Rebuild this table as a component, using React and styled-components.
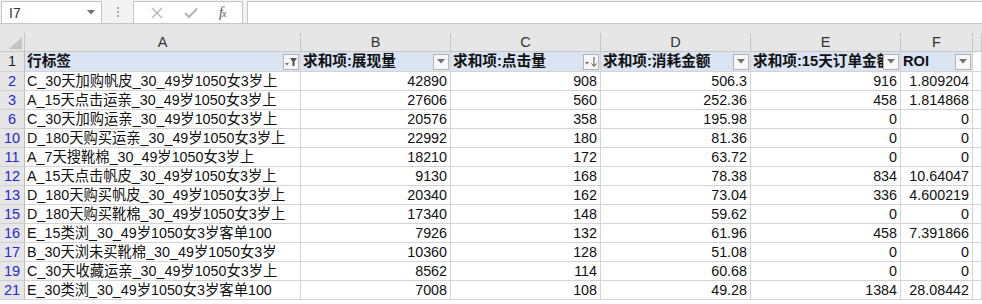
import React from 'react';
import styled, { createGlobalStyle } from 'styled-components';

const GlobalStyle = createGlobalStyle`
  body {
    margin: 0;
    background: #ffffff;
  }
  #root {
    width: 982px;
    height: 304px;
    overflow: hidden;
  }
`;

const FONT = `"Liberation Sans", "Noto Sans CJK SC", sans-serif`;

const Page = styled.div`
  width: 982px;
  font-family: ${FONT};
`;

const FormulaBar = styled.div`
  display: flex;
  align-items: stretch;
  height: 24px;
  padding-top: 1px;
  box-sizing: border-box;
  background: #f3f3f3;
  border-bottom: 1px solid #c6c6c6;
`;

const NameBox = styled.div`
  width: 101px;
  margin-left: 1px;
  box-sizing: border-box;
  background: #fff;
  border: 1px solid #c6c6c6;
  border-bottom: none;
  display: flex;
  align-items: center;
  justify-content: space-between;
  padding: 0 6px 0 7px;
  font-size: 14px;
  color: #333;
`;

const Dots = styled.div`
  width: 31px;
  display: flex;
  flex-direction: column;
  align-items: center;
  justify-content: center;
  gap: 2px;

  span {
    width: 2px;
    height: 2px;
    background: #a8a8a8;
  }
`;

const FxGroup = styled.div`
  width: 110px;
  box-sizing: border-box;
  background: #fff;
  border: 1px solid #c6c6c6;
  border-bottom: none;
  display: flex;
  align-items: center;
  justify-content: space-around;
  padding: 0 6px;
`;

const Fx = styled.span`
  font-family: "Liberation Serif", serif;
  font-style: italic;
  font-size: 14px;
  color: #555;
  letter-spacing: -1px;

  sub {
    font-size: 10px;
    vertical-align: 0;
  }
`;

const FormulaInput = styled.div`
  flex: 1;
  margin-left: 4px;
  background: #fff;
  border: 1px solid #c6c6c6;
  border-bottom: none;
  border-right: none;
`;

const HeaderGap = styled.div`
  height: 9px;
  background: #e6e6e6;
`;

const Sheet = styled.div`
  display: grid;
  grid-template-columns: 25px 276px 150px 150px 150px 150px 72px 1fr;
  grid-template-rows: 19px 20px;
  grid-auto-rows: 19px;
  font-size: 14.3px;
  line-height: 18px;
`;

const Corner = styled.div`
  background: #e6e6e6;
  border-right: 1px solid #c6c6c6;
  border-bottom: 1px solid #c6c6c6;
  display: flex;
  align-items: flex-end;
  justify-content: flex-end;
  padding: 0 2px 2px 0;
`;

const ColHead = styled.div`
  background: #e6e6e6;
  border-right: 1px solid #c6c6c6;
  border-bottom: 1px solid #c6c6c6;
  color: #333;
  text-align: center;
  font-size: 14.5px;
`;

const RowHead = styled.div`
  background: #e6e6e6;
  border-right: 1px solid #bdbdbd;
  border-bottom: 1px solid #d0d0d0;
  color: ${(p) => (p.$filtered ? '#2525d8' : '#222')};
  text-align: center;
  font-size: 14.5px;
  line-height: ${(p) => (p.$filtered ? '18px' : '19px')};
`;

const Cell = styled.div`
  border-right: 1px solid #d4d4d4;
  border-bottom: 1px solid #d4d4d4;
  padding: 0 3px 0 2px;
  white-space: nowrap;
  overflow: hidden;
  color: #111;
  text-align: ${(p) => (p.$num ? 'right' : 'left')};
`;

const HeadCell = styled.div`
  display: flex;
  align-items: center;
  background: #dbe4f3;
  border-right: 1px solid #d4d4d4;
  border-bottom: 1px solid #d4d4d4;
  padding: 0 1px 0 2px;
  color: #111;
  font-size: 14.67px;
  font-weight: bold;
  white-space: nowrap;
  overflow: hidden;
  line-height: 19px;

  > span {
    flex: 1;
    min-width: 0;
    overflow: hidden;
  }
`;

const FilterButton = styled.div`
  flex: none;
  width: 16px;
  height: 16px;
  box-sizing: border-box;
  border: 1px solid #b4b4b4;
  background: #f7f7f7;
  display: flex;
  align-items: center;
  justify-content: center;
`;

const Arrow = () => (
  <svg width="8" height="5" viewBox="0 0 8 5">
    <polygon points="0,0 8,0 4,4.5" fill="#707070" />
  </svg>
);

const FunnelIcon = () => (
  <svg width="14" height="12" viewBox="0 0 14 12">
    <polygon points="1,7 5,7 3,9.5" fill="#707070" />
    <polygon points="6,2 13,2 10.5,5.5 10.5,10 8.5,10 8.5,5.5" fill="#505050" />
  </svg>
);

const SortIcon = () => (
  <svg width="14" height="12" viewBox="0 0 14 12">
    <polygon points="1,6 5,6 3,8.5" fill="#707070" />
    <line x1="10" y1="1" x2="10" y2="10" stroke="#505050" strokeWidth="1" />
    <polyline points="7.5,7.5 10,10.5 12.5,7.5" fill="none" stroke="#505050" strokeWidth="1" />
  </svg>
);

const CornerMark = () => (
  <svg width="13" height="12" viewBox="0 0 13 12">
    <polygon points="13,0 13,12 0,12" fill="#c3c3c3" />
  </svg>
);

const columns = ['A', 'B', 'C', 'D', 'E', 'F', ''];

const headers = [
  { label: '行标签', icon: 'filter' },
  { label: '求和项:展现量' },
  { label: '求和项:点击量', icon: 'sort' },
  { label: '求和项:消耗金额' },
  { label: '求和项:15天订单金额' },
  { label: 'ROI' },
];

const rows = [
  [2, 'C_30天加购帆皮_30_49岁1050女3岁上', 42890, 908, 506.3, 916, 1.809204],
  [3, 'A_15天点击运亲_30_49岁1050女3岁上', 27606, 560, 252.36, 458, 1.814868],
  [6, 'C_30天加购运亲_30_49岁1050女3岁上', 20576, 358, 195.98, 0, 0],
  [10, 'D_180天购买运亲_30_49岁1050女3岁上', 22992, 180, 81.36, 0, 0],
  [11, 'A_7天搜靴棉_30_49岁1050女3岁上', 18210, 172, 63.72, 0, 0],
  [12, 'A_15天点击帆皮_30_49岁1050女3岁上', 9130, 168, 78.38, 834, 10.64047],
  [13, 'D_180天购买帆皮_30_49岁1050女3岁上', 20340, 162, 73.04, 336, 4.600219],
  [15, 'D_180天购买靴棉_30_49岁1050女3岁上', 17340, 148, 59.62, 0, 0],
  [16, 'E_15类浏_30_49岁1050女3岁客单100', 7926, 132, 61.96, 458, 7.391866],
  [17, 'B_30天浏未买靴棉_30_49岁1050女3岁', 10360, 128, 51.08, 0, 0],
  [19, 'C_30天收藏运亲_30_49岁1050女3岁上', 8562, 114, 60.68, 0, 0],
  [21, 'E_30类浏_30_49岁1050女3岁客单100', 7008, 108, 49.28, 1384, 28.08442],
];

const App = () => {
  return (
    <Page>
      <GlobalStyle />
      <FormulaBar>
        <NameBox>
          <span>I7</span>
          <Arrow />
        </NameBox>
        <Dots>
          <span />
          <span />
          <span />
        </Dots>
        <FxGroup>
          <svg width="12" height="12" viewBox="0 0 12 12">
            <path d="M1 1 L11 11 M11 1 L1 11" stroke="#b5b5b5" strokeWidth="1.4" />
          </svg>
          <svg width="14" height="12" viewBox="0 0 14 12">
            <path d="M1 6 L5 10 L13 1.5" stroke="#b5b5b5" strokeWidth="2" fill="none" />
          </svg>
          <Fx>
            f<sub>x</sub>
          </Fx>
        </FxGroup>
        <FormulaInput />
      </FormulaBar>
      <HeaderGap />
      <Sheet>
        <Corner>
          <CornerMark />
        </Corner>
        {columns.map((c, i) => (
          <ColHead key={i}>{c}</ColHead>
        ))}

        <RowHead>1</RowHead>
        {headers.map((h) => (
          <HeadCell key={h.label}>
            <span>{h.label}</span>
            <FilterButton>
              {h.icon === 'filter' ? <FunnelIcon /> : h.icon === 'sort' ? <SortIcon /> : <Arrow />}
            </FilterButton>
          </HeadCell>
        ))}
        <Cell />

        {rows.map(([n, label, ...nums]) => (
          <React.Fragment key={n}>
            <RowHead $filtered>{n}</RowHead>
            <Cell>{label}</Cell>
            {nums.map((v, i) => (
              <Cell key={i} $num>
                {v}
              </Cell>
            ))}
            <Cell />
          </React.Fragment>
        ))}
      </Sheet>
    </Page>
  );
};

export default App;
